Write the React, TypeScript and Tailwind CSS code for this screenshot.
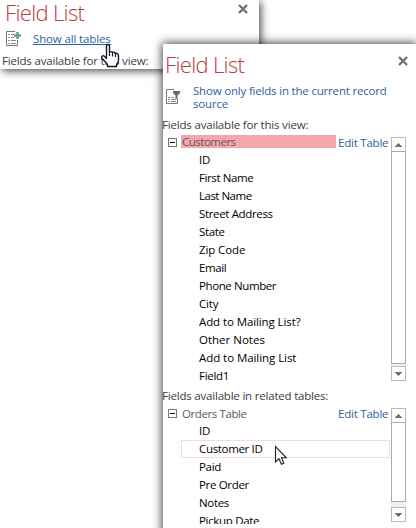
const fields = [
  { name: "ID", track: "tracking-[-0.2px]" },
  { name: "First Name", track: "tracking-[-0.4px]" },
  { name: "Last Name", track: "tracking-[-0.5px]" },
  { name: "Street Address", track: "tracking-[-0.35px]" },
  { name: "State", track: "tracking-[-0.35px]" },
  { name: "Zip Code", track: "tracking-[-0.1px]" },
  { name: "Email", track: "tracking-[-0.4px]" },
  { name: "Phone Number", track: "tracking-[-0.4px]" },
  { name: "City", track: "tracking-[-0.2px]" },
  { name: "Add to Mailing List?", track: "tracking-[-0.1px]" },
  { name: "Other Notes", track: "tracking-[0px]" },
  { name: "Add to Mailing List", track: "tracking-[-0.06px]" },
  { name: "Field1", track: "tracking-[-0.28px]" },
];

const related = ["ID", "Customer ID", "Paid", "Pre Order", "Notes", "Pickup Date"];

function Title() {
  return (
    <h1 className="text-[22px] leading-[24px] font-light tracking-[-0.65px] whitespace-nowrap text-[#b53a48]">
      Field List
    </h1>
  );
}

function CloseIcon() {
  return (
    <svg width="10" height="10" viewBox="0 0 10 10" className="shrink-0">
      <path d="M1 1L9 9M9 1L1 9" stroke="#6f6f6f" strokeWidth="2.3" />
    </svg>
  );
}

function ListIcon({ filter = false }: { filter?: boolean }) {
  return (
    <svg width="16" height="16" viewBox="0 0 16 16" className="shrink-0">
      {filter ? (
        <>
          <path d="M11.5 10V14.5H.5V.5H8" fill="none" stroke="#777" />
          <path d="M7 2H14V4L11.5 6.5V10H9.5V6.5L7 4Z" fill="#6b6b6b" />
          <path d="M5 8.5H8M5 10.5H10M5 12.5H10M2 8.5H4M2 10.5H4M2 12.5H4" stroke="#8a8a8a" />
        </>
      ) : (
        <>
          <path d="M11.5 9V14.5H.5V.5H9" fill="none" stroke="#777" />
          <path d="M5 3.5H8M5 6.5H8M5 9.5H10M5 12.5H10M2 3.5H4M2 6.5H4M2 9.5H4M2 12.5H4" stroke="#8a8a8a" />
          <path d="M11.5 1V8M8 4.5H15" stroke="#5f9f83" strokeWidth="2.4" />
        </>
      )}
    </svg>
  );
}

function Collapse() {
  return (
    <span className="flex size-[9px] shrink-0 items-center justify-center border border-[#777] bg-white">
      <span className="h-px w-[5px] bg-black" />
    </span>
  );
}

function Arrow({ down = false }: { down?: boolean }) {
  return (
    <div className="flex size-[15px] shrink-0 items-center justify-center border border-[#b9b9b9] bg-white">
      <svg width="7" height="4" viewBox="0 0 7 4" shapeRendering="crispEdges">
        <path d={down ? "M0 0H7V1H6V2H5V3H4V4H3V3H2V2H1V1H0Z" : "M0 4H7V3H6V2H5V1H4V0H3V1H2V2H1V3H0Z"} fill="#707070" />
      </svg>
    </div>
  );
}

export default function App() {
  return (
    <main className="relative h-[528px] w-[416px] overflow-hidden bg-white font-['Open_Sans','Noto_Sans',sans-serif] text-[11.5px] text-black">
      <section className="h-[69px] w-[259px] bg-white shadow-[2px_2px_8px_0px_rgba(0,0,0,0.7)]">
        <header className="flex h-[29px] items-start justify-between pr-[11px] pl-[5px]">
          <Title />
          <div className="pt-[4px]"><CloseIcon /></div>
        </header>
        <div className="flex h-[23px] pt-[2px] pl-[6px]">
          <ListIcon />
          <a className="ml-[11px] h-[14px] border-b border-[#2b5fa0] leading-[16px] tracking-[-0.14px] whitespace-nowrap text-[#2b5fa0]">
            Show all tables
          </a>
        </div>
        <p className="pl-[2px] leading-[18px] tracking-[-0.18px] whitespace-nowrap text-[#3c3c3c]">
          Fields available for this view:
        </p>
      </section>
      <svg className="absolute top-[43px] left-[100px]" width="20" height="25" viewBox="0 0 20 25">
        <path
          d="M6.5 3Q6.5 1.5 8 1.5T9.5 3V9Q11 8 12.5 9.5Q14 8.5 15.3 10.2Q18.5 10 18.5 13V17Q18.5 20 16.5 21.5V23.5H7.5V21.5L2.2 15.5Q1 13.5 2.5 12.8T6.5 15.5Z"
          fill="white" stroke="#15152a" strokeWidth="1.4" strokeLinejoin="round"
        />
        <path d="M9.5 9V13M12.5 10V13.5M15.5 10.5V14" stroke="#15152a" strokeWidth="1.2" />
      </svg>

      <section className="absolute top-[44px] left-[163px] h-[500px] w-[253px] bg-white shadow-[0_0_9px_1px_rgba(0,0,0,0.75)]">
        <header className="flex h-[39px] items-start justify-between pt-[8px] pr-[8px] pl-[2px]">
          <Title />
          <div className="pt-[4px]"><CloseIcon /></div>
        </header>
        <div className="flex h-[34px] pl-[3px]">
          <div className="pt-[6px]"><ListIcon filter /></div>
          <a className="ml-[11px] pt-[1px] leading-[13px] tracking-[-0.19px] whitespace-nowrap text-[#2b5fa0]">
            Show only fields in the current record
            <br />
            source
          </a>
        </div>
        <p className="-ml-px h-[18px] leading-[16px] tracking-[-0.18px] whitespace-nowrap text-[#3c3c3c]">
          Fields available for this view:
        </p>

        <div className="flex h-[251px]">
          <div className="w-[228px]">
            <div className="flex h-[16px] pl-[5px]">
              <div className="pt-[3px]"><Collapse /></div>
              <div className="ml-[4px] h-[13px] w-[155px] shrink-0 bg-[#f6a7ab] pl-[1px] leading-[14px] tracking-[-0.5px] text-[#6a5557]">Customers</div>
              <span className="ml-[2px] leading-[16px] tracking-[-0.22px] whitespace-nowrap text-[#2b5fa0]">Edit Table</span>
            </div>
            <ul>
              {fields.map((f) => (
                <li key={f.name} className={`h-[18px] pl-[36px] leading-[17px] whitespace-nowrap ${f.track}`}>{f.name}</li>
              ))}
            </ul>
          </div>
          <div className="mt-[2px] flex h-[244px] w-[15px] flex-col bg-[#f0f0f0]">
            <Arrow />
            <div className="-mt-px mb-[2px] flex-1 border border-[#aaa] bg-white" />
            <Arrow down />
          </div>
        </div>

        <p className="-ml-px h-[20px] pt-[1px] leading-[17px] tracking-[-0.2px] whitespace-nowrap text-[#3c3c3c]">
          Fields available in related tables:
        </p>
        <div className="flex h-[118px] overflow-hidden">
          <div className="w-[228px]">
            <div className="flex h-[16px] pl-[5px]">
              <div className="pt-[3px]"><Collapse /></div>
              <div className="ml-[4px] w-[155px] shrink-0 pl-[1px] leading-[15px] tracking-[-0.4px] text-[#5c5c5c]">Orders Table</div>
              <span className="ml-[2px] leading-[16px] tracking-[-0.22px] whitespace-nowrap text-[#2b5fa0]">Edit Table</span>
            </div>
            <ul>
              {related.map((name) => (
                <li
                  key={name}
                  className={`ml-[18px] h-[18px] w-[209px] border pl-[17px] leading-[15px] tracking-[-0.33px] whitespace-nowrap ${
                    name === "Customer ID" ? "border-[#f8d8da]" : "border-transparent"
                  }`}
                >
                  {name}
                </li>
              ))}
            </ul>
          </div>
          <div className="mt-[2px] flex h-[114px] w-[15px] flex-col bg-[#f0f0f0]">
            <Arrow />
            <div className="-mt-px mb-[5px] flex-1 border border-[#aaa] bg-white" />
            <Arrow down />
          </div>
        </div>
      </section>
      <svg className="absolute top-[445px] left-[274px]" width="14" height="21" viewBox="0 0 14 21">
        <path d="M1.5 1.5V17L5 13.7L7.4 19.3L9.8 18.2L7.5 12.8H12.3Z" fill="white" stroke="#22222e" strokeWidth="1.1" />
      </svg>
    </main>
  );
}
